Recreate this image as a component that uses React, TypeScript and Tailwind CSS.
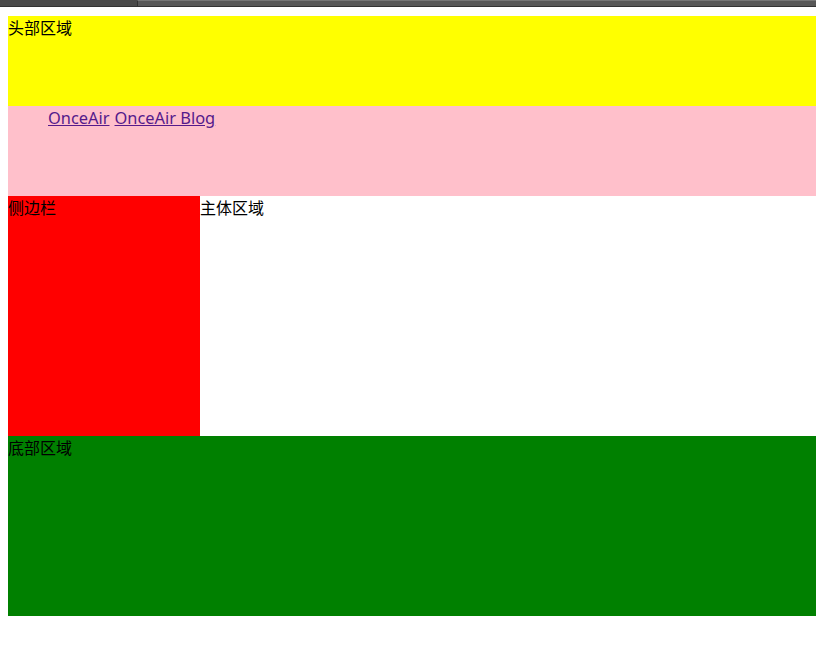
export default function App() {
  return (
    <div className="min-h-[653px] bg-white font-['Microsoft_YaHei','Noto_Sans_CJK_SC',sans-serif] text-[16px] leading-[22px] text-black">
      <div className="flex h-[7px]">
        <div className="w-[137px] border-b border-[#333] bg-[#4a4a4a]" />
        <div className="flex-1 border-b border-l border-t border-[#333] border-t-[#777] bg-[#585858]" />
      </div>
      <div className="pl-[8px] pt-[9px]">
        <header className="h-[90px] bg-[#ffff00]">头部区域</header>
        <nav className="h-[90px] bg-[#ffc0cb]">
          <ul className="flex gap-[5px] pl-[40px] font-['Noto_Sans','Noto_Sans_CJK_SC',sans-serif] text-[16.4px] leading-[23px]">
            <li>
              <a href="#" className="text-[#551a8b] underline">OnceAir</a>
            </li>
            <li>
              <a href="#" className="text-[#551a8b] underline">OnceAir Blog</a>
            </li>
          </ul>
        </nav>
        <div className="flex h-[240px]">
          <aside className="w-[192px] bg-[#ff0000]">侧边栏</aside>
          <main className="flex-1 bg-white">主体区域</main>
        </div>
        <footer className="h-[180px] bg-[#008000]">底部区域</footer>
      </div>
    </div>
  );
}
